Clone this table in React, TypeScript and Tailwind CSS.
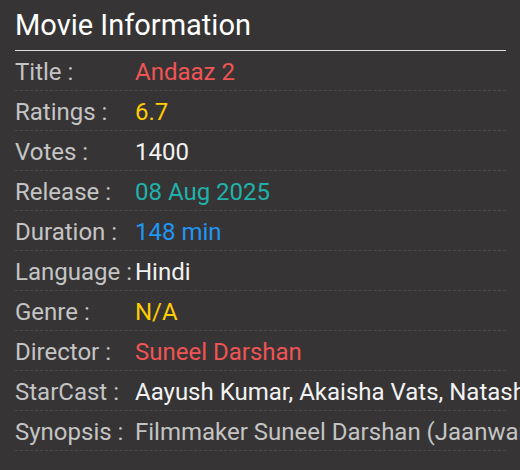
import React from 'react';

const rows = [
  { label: 'Title :', value: 'Andaaz 2', color: 'text-[#f05454]' },
  { label: 'Ratings :', value: '6.7', color: 'text-[#ffcc00]' },
  { label: 'Votes :', value: '1400', color: 'text-[#f2f2f2]' },
  { label: 'Release :', value: '08 Aug 2025', color: 'text-[#20b2aa]' },
  { label: 'Duration :', value: '148 min', color: 'text-[#2196f3]' },
  { label: 'Language :', value: 'Hindi', color: 'text-[#f2f2f2]' },
  { label: 'Genre :', value: 'N/A', color: 'text-[#ffcc00]' },
  { label: 'Director :', value: 'Suneel Darshan', color: 'text-[#f05454]' },
  { label: 'StarCast :', value: 'Aayush Kumar, Akaisha Vats, Natasha Fernandez', color: 'text-[#f2f2f2]' },
  {
    label: 'Synopsis :',
    value: 'Filmmaker Suneel Darshan (Jaanwar, Andaaz) returns with a romantic musical drama',
    color: 'text-[#c4c4c4]',
  },
];

export default function App() {
  return (
    <div className="w-[520px] h-[470px] overflow-hidden bg-[#363435] px-[15px] pt-[6px] font-['Roboto',sans-serif]">
      <div className="w-[491px]">
        <h2 className="text-[29px] leading-[38px] text-white pb-[6px] border-b border-[#dcdcdc]">
          Movie Information
        </h2>
        {rows.map((r) => (
          <div
            key={r.label}
            className="flex items-center h-[40px] pt-[2px] border-b border-dashed border-[#4c4a4b] text-[24px] whitespace-nowrap"
          >
            <span className="w-[120px] shrink-0 text-[#c4c4c4]">{r.label}</span>
            <span className={r.color}>{r.value}</span>
          </div>
        ))}
      </div>
    </div>
  );
}
